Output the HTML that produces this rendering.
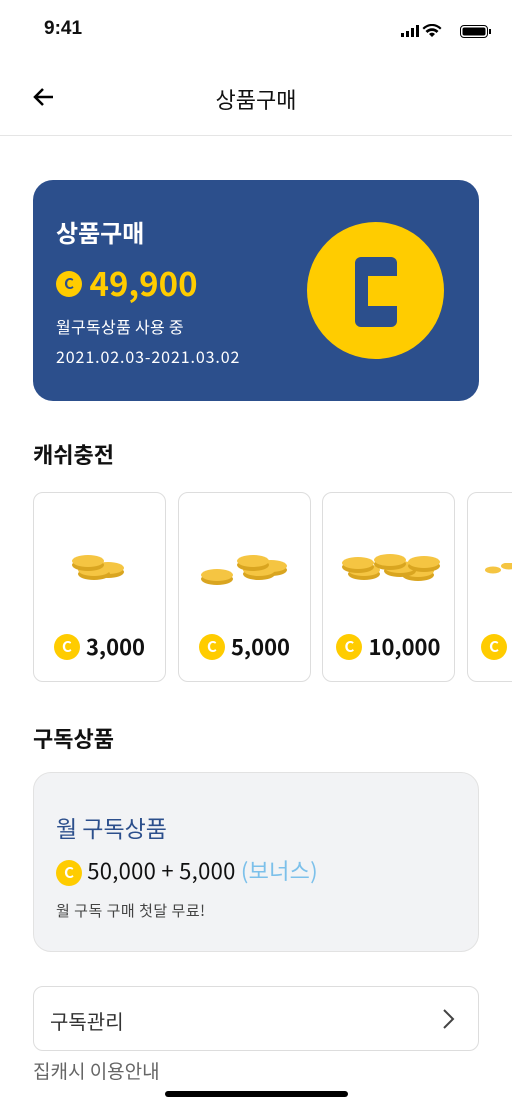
<!DOCTYPE html><html><head><meta charset="utf-8"><style>
*{margin:0;padding:0;box-sizing:border-box}
body{width:512px;height:1109px;overflow:hidden;background:#fff;font-family:"Noto Sans CJK KR","Liberation Sans",sans-serif;position:relative;color:#111;line-height:1.2}
.a{position:absolute}
.coin{display:inline-block;width:26px;height:26px;border-radius:50%;background:#fc0;color:#fff;font-weight:bold;font-size:15px;text-align:center;line-height:26px;vertical-align:middle;letter-spacing:0}
.card{position:absolute;top:492px;width:133px;height:190px;border:1.5px solid #ddd;border-radius:10px;background:#fff}
.amt{position:absolute;top:140px;left:0;right:0;text-align:center;font-size:22px;font-weight:bold;white-space:nowrap}
.amt .coin{margin-right:6px;position:relative;top:-2px}
</style></head><body>
<div class="a" style="left:44px;top:18px;font-size:19px;font-weight:bold;font-family:'Liberation Sans',sans-serif">9:41</div>
<svg class="a" style="left:400px;top:24px" width="92" height="16" viewBox="0 0 92 16">
<rect x="1" y="9" width="3" height="4" fill="#000"/><rect x="6" y="7" width="3" height="6" fill="#000"/><rect x="11" y="4" width="3" height="9" fill="#000"/><rect x="16" y="1" width="3" height="12" fill="#000"/>
<path d="M32 13 l-3-3 a4 4 0 0 1 6 0z M25.5 7 a9 9 0 0 1 13 0 l-2 2 a6 6 0 0 0 -9 0z M22.5 4 a13 13 0 0 1 19 0 l-1.5 1.5 a11 11 0 0 0 -16 0z" fill="#000"/>
<rect x="60.5" y="1.5" width="27" height="12" rx="3.5" fill="none" stroke="#000"/><rect x="62.5" y="3.5" width="23" height="8" rx="2" fill="#000"/><rect x="89" y="5" width="2" height="5" fill="#000"/></svg>
<svg class="a" style="left:31px;top:85px" width="26" height="24" viewBox="0 0 26 24"><path d="M22 12H4 M12 4 L4 12 L12 20" stroke="#000" stroke-width="2.5" fill="none"/></svg>
<div class="a" style="left:0;right:0;top:86px;text-align:center;font-size:22px">상품구매</div>
<div class="a" style="left:0;right:0;top:135px;height:1px;background:#e5e5e5"></div>
<div class="a" style="left:33px;top:180px;width:446px;height:221px;border-radius:20px;background:#2c4f8c">
<div class="a" style="left:23px;top:38px;color:#fff;font-size:24px;font-weight:bold">상품구매</div>
<div class="a" style="left:23px;top:83px;color:#fc0;font-size:33px;font-weight:bold;white-space:nowrap"><span class="coin" style="color:#2c4f8c;position:relative;top:-3px">C</span> 49,900</div>
<div class="a" style="left:23px;top:137px;color:#fff;font-size:16px;letter-spacing:0.3px">월구독상품 사용 중</div>
<div class="a" style="left:23px;top:167px;color:#fff;font-size:16px;letter-spacing:0.9px">2021.02.03-2021.03.02</div>
<div class="a" style="left:274px;top:42px;width:137px;height:137px;border-radius:50%;background:#fc0"></div>
<div class="a" style="left:322px;top:77px;width:42px;height:70px;background:#2c4f8c;border-radius:6px"></div>
<div class="a" style="left:335px;top:96px;width:32px;height:30px;background:#fc0"></div>
</div>
<div class="a" style="left:33px;top:441px;font-size:22px;font-weight:bold">캐쉬충전</div>
<svg width="0" height="0" style="position:absolute"><defs><g id="c"><ellipse cx="0" cy="4" rx="16" ry="6" fill="#d9a520"/><ellipse cx="0" cy="0" rx="16" ry="6" fill="#f5c542"/></g></defs></svg>
<div class="card" style="left:33px"><svg class="a" style="left:30px;top:55px" width="70" height="40"><use href="#c" x="44" y="20"/><use href="#c" x="30" y="22"/><use href="#c" x="24" y="13"/></svg><div class="amt"><span class="coin">C</span>3,000</div></div>
<div class="card" style="left:178px"><svg class="a" style="left:18px;top:55px" width="100" height="40"><use href="#c" x="20" y="27"/><use href="#c" x="74" y="18"/><use href="#c" x="62" y="22"/><use href="#c" x="56" y="13"/></svg><div class="amt"><span class="coin">C</span>5,000</div></div>
<div class="card" style="left:322px"><svg class="a" style="left:15px;top:55px" width="105" height="40"><use href="#c" x="26" y="22"/><use href="#c" x="20" y="15"/><use href="#c" x="80" y="23"/><use href="#c" x="62" y="19"/><use href="#c" x="52" y="12"/><use href="#c" x="86" y="14"/></svg><div class="amt"><span class="coin">C</span>10,000</div></div>
<div class="card" style="left:467px"><svg class="a" style="left:15px;top:70px" width="40" height="20"><ellipse cx="10" cy="7" rx="8" ry="3.5" fill="#f5c542"/><ellipse cx="26" cy="3" rx="8" ry="3.5" fill="#f5c542"/></svg><div class="amt" style="text-align:left;left:13px"><span class="coin">C</span></div></div>
<div class="a" style="left:33px;top:725px;font-size:22px;font-weight:bold">구독상품</div>
<div class="a" style="left:33px;top:772px;width:446px;height:180px;border-radius:18px;background:#f2f3f5;border:1px solid #e2e2e2">
<div class="a" style="left:22px;top:41px;font-size:23px;color:#2c4f8c">월 구독상품</div>
<div class="a" style="left:22px;top:84px;font-size:22px;white-space:nowrap;letter-spacing:0.3px"><span class="coin">C</span> 50,000 + 5,000 <span style="color:#7cc0ea">(보너스)</span></div>
<div class="a" style="left:22px;top:129px;font-size:15px;color:#444;letter-spacing:0.5px">월 구독 구매 첫달 무료!</div>
</div>
<div class="a" style="left:33px;top:986px;width:446px;height:65px;border-radius:10px;border:1.5px solid #ddd">
<div class="a" style="left:16px;top:22px;font-size:20px;color:#333">구독관리</div>
<svg class="a" style="left:406px;top:20px" width="16" height="24"><path d="M4 3 L13 12 L4 21" stroke="#444" stroke-width="2" fill="none"/></svg>
</div>
<div class="a" style="left:33px;top:1060px;font-size:19px;color:#666">집캐시 이용안내</div>
<div class="a" style="left:165px;top:1091px;width:183px;height:6px;border-radius:3px;background:#000"></div>
</body></html>
